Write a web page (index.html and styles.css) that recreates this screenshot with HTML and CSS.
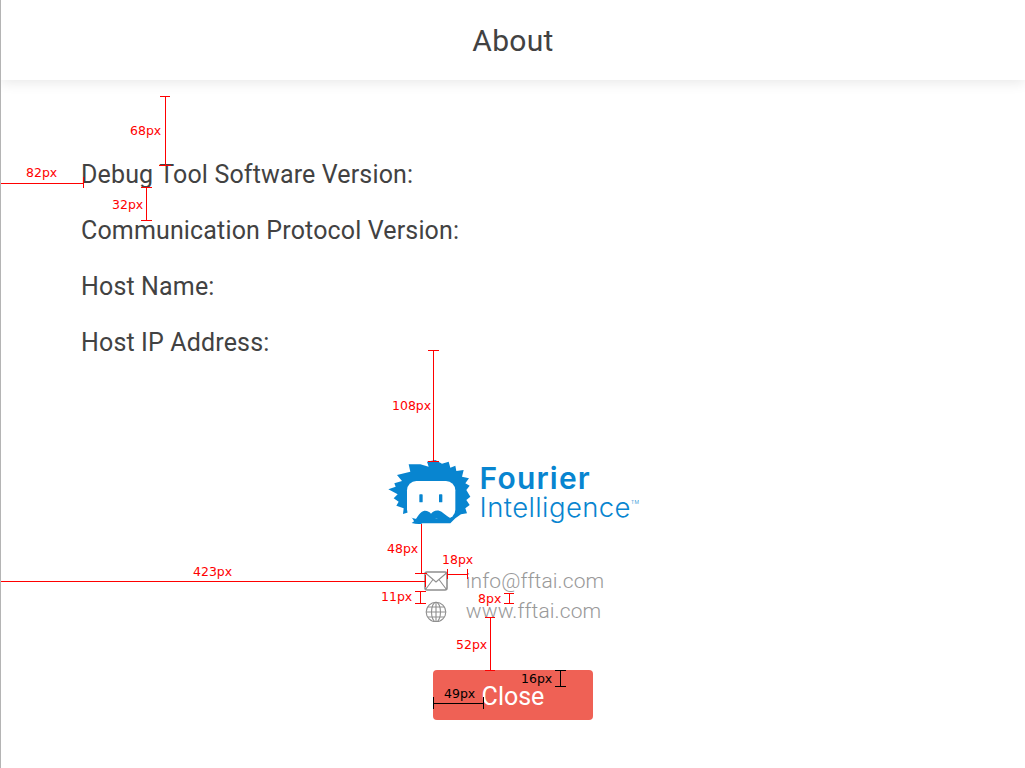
FILE: index.html
```html
<!DOCTYPE html>
<html lang="en">
<head>
<meta charset="utf-8">
<title>About</title>
<link rel="stylesheet" href="styles.css">
</head>
<body>
<div class="page">
  <header class="topbar"><h1 class="title">About</h1></header>
  <main class="content">
    <section class="info">
      <p class="info-row">Debug Tool Software Version:</p>
      <p class="info-row">Communication Protocol Version:</p>
      <p class="info-row">Host Name:</p>
      <p class="info-row">Host IP Address:</p>
    </section>
    <div class="brand">
      <svg class="mascot" viewBox="0 0 270 225" aria-hidden="true">
        <polygon class="blue" points="145,15 165,26 185,20 190,38 205,32 208,48 230,45 225,65 246,70 235,85 248,92 238,105 250,125 238,135 248,150 235,160 240,175 222,178 205,190 190,205 85,205 65,172 48,177 50,160 28,152 35,140 20,130 32,118 4,103 26,95 22,85 45,78 30,60 70,50 65,28 100,28 125,35 120,20"/>
        <rect class="white" x="60" y="78" width="145" height="114" rx="28"/>
        <rect class="blue" x="97" y="118" width="10" height="24" rx="2"/>
        <rect class="blue" x="156" y="118" width="10" height="24" rx="2"/>
        <path class="blue" d="M74 204 C90 195 95 172 110 168 C120 166 128 172 132 176 C137 171 146 164 158 168 C170 172 178 184 192 190 C180 194 170 198 160 194 C150 190 145 190 140 194 L134 198 L124 192 C116 190 110 198 104 206 C94 208 84 206 74 204Z"/>
      </svg>
      <div class="wordmark">
        <span class="word-top">Fourier</span>
        <span class="word-bottom">Intelligence<sup class="tm">TM</sup></span>
      </div>
    </div>
    <div class="contacts">
      <div class="contact">
        <svg class="icon" viewBox="0 0 24 20" aria-hidden="true">
          <rect class="stroke" x="1" y="1" width="22" height="18" rx="2"/>
          <path class="stroke-thin" d="M1.5 2 L12 11 L22.5 2 M1.5 18.500 L9 8.500 M22.5 18.500 L15 8.500"/>
        </svg>
        <span>info@fftai.com</span>
      </div>
      <div class="contact">
        <svg class="icon" viewBox="0 0 24 22" aria-hidden="true">
          <circle class="stroke-thin" cx="12" cy="12" r="9.800"/>
          <ellipse class="stroke-thin" cx="12" cy="12" rx="4.500" ry="9.800"/>
          <path class="stroke-thin" d="M12 2.200 V21.800 M2.200 12 H21.800 M3.500 7 H20.500 M3.500 17 H20.500"/>
        </svg>
        <span>www.fftai.com</span>
      </div>
    </div>
    <button class="close" type="button">Close</button>
  </main>
  <svg class="redlines" viewBox="0 0 1025 768" aria-hidden="true">
    <g class="red">
      <path d="M165.500 96 V165 M160 96.500 H170 M159 165.500 H171"/>
      <path d="M0 183.500 H84 M.5 177 V189 M83.500 177 V188"/>
      <path d="M146.500 187 V220 M141 187.500 H152 M141 220.500 H152"/>
      <path d="M433.500 350 V461 M428 350.500 H439 M428 461.500 H439"/>
      <path d="M421.500 524 V573 M415 573.500 H427"/>
      <path d="M0 581.500 H425 M.5 575 V587 M425.500 575 V587"/>
      <path d="M447 574.500 H467 M447.500 569 V579 M467.500 569 V579"/>
      <path d="M420.500 591 V603 M415 591.500 H426 M415 603.500 H426"/>
      <path d="M509.500 593 V603 M504 593.500 H514 M504 603.500 H514"/>
      <path d="M490.500 617 V670 M485 617.500 H495 M485 670.500 H495"/>
      <text x="130" y="135">68px</text>
      <text x="26" y="177">82px</text>
      <text x="112" y="209">32px</text>
      <text x="392" y="410">108px</text>
      <text x="387" y="553">48px</text>
      <text x="193" y="576">423px</text>
      <text x="442" y="564">18px</text>
      <text x="381" y="601">11px</text>
      <text x="478" y="603">8px</text>
      <text x="456" y="649">52px</text>
    </g>
    <g class="black">
      <path d="M433.500 703.500 H483 M433.500 697 V709 M483.500 697 V709"/>
      <path d="M560.500 670 V686 M555 670.500 H566 M555 686.500 H566"/>
      <text x="444" y="698">49px</text>
      <text x="521" y="683">16px</text>
    </g>
  </svg>
</div>
</body>
</html>
```
FILE: styles.css
```css
* { box-sizing: border-box; }
html, body { margin: 0; padding: 0; background: #fff; }
.page {
  position: relative;
  width: 1025px;
  height: 768px;
  overflow: hidden;
  border-left: 1px solid #b4b4b4;
  font-family: Roboto, "Liberation Sans", sans-serif;
  color: #424242;
}
.topbar {
  height: 80px;
  display: flex;
  align-items: center;
  justify-content: center;
  background: #fff;
  box-shadow: 0 3px 12px rgba(0, 0, 0, 0.09);
}
.title {
  margin: 0;
  font-size: 30px;
  font-weight: 400;
  letter-spacing: 0.3px;
}
.content {
  display: flex;
  flex-direction: column;
  align-items: center;
  padding-top: 66px;
}
.info { align-self: stretch; padding-left: 80px; }
.info-row {
  margin: 0;
  height: 56px;
  line-height: 58px;
  font-size: 25px;
  letter-spacing: 0.15px;
}
.brand {
  display: flex;
  align-items: flex-start;
  gap: 3px;
  margin-top: 85px;
}
.mascot { width: 90px; height: 75px; display: block; }
.blue { fill: #0885d0; }
.white { fill: #fff; }
.wordmark {
  display: flex;
  flex-direction: column;
  color: #0885d0;
  font-family: Inter, Lato, sans-serif;
  padding-top: 8px;
}
.word-top { font-size: 30px; font-weight: 600; line-height: 30px; letter-spacing: 1.2px; }
.word-bottom { font-size: 27.5px; font-weight: 300; line-height: 29px; letter-spacing: 0.4px; }
.tm { font-size: 5px; vertical-align: 13px; line-height: 0; }
.contacts {
  display: flex;
  flex-direction: column;
  gap: 8px;
  margin-top: 40px;
  margin-left: 2px;
  color: #999;
  font-size: 21px;
  font-weight: 300;
  letter-spacing: 0.1px;
}
.contact { display: flex; align-items: center; gap: 18px; height: 22px; line-height: 22px; }
.icon { width: 24px; height: 22px; display: block; }
.stroke { fill: none; stroke: #8f8f8f; stroke-width: 1.6; }
.stroke-thin { fill: none; stroke: #8f8f8f; stroke-width: 1.1; }
.close {
  width: 160px;
  height: 50px;
  margin-top: 48px;
  border: 0;
  border-radius: 4px;
  background: #ef6155;
  color: #fff;
  font-family: inherit;
  font-size: 25px;
  padding: 3px 0 0;
}
.redlines {
  position: absolute;
  left: -1px;
  top: 0;
  width: 1025px;
  height: 768px;
  pointer-events: none;
}
.redlines path { fill: none; stroke-width: 1; }
.redlines text { font-family: "DejaVu Sans", sans-serif; font-size: 12.5px; }
.red path { stroke: #f00; }
.red text { fill: #f00; }
.black path { stroke: #000; }
.black text { fill: #000; }
```
